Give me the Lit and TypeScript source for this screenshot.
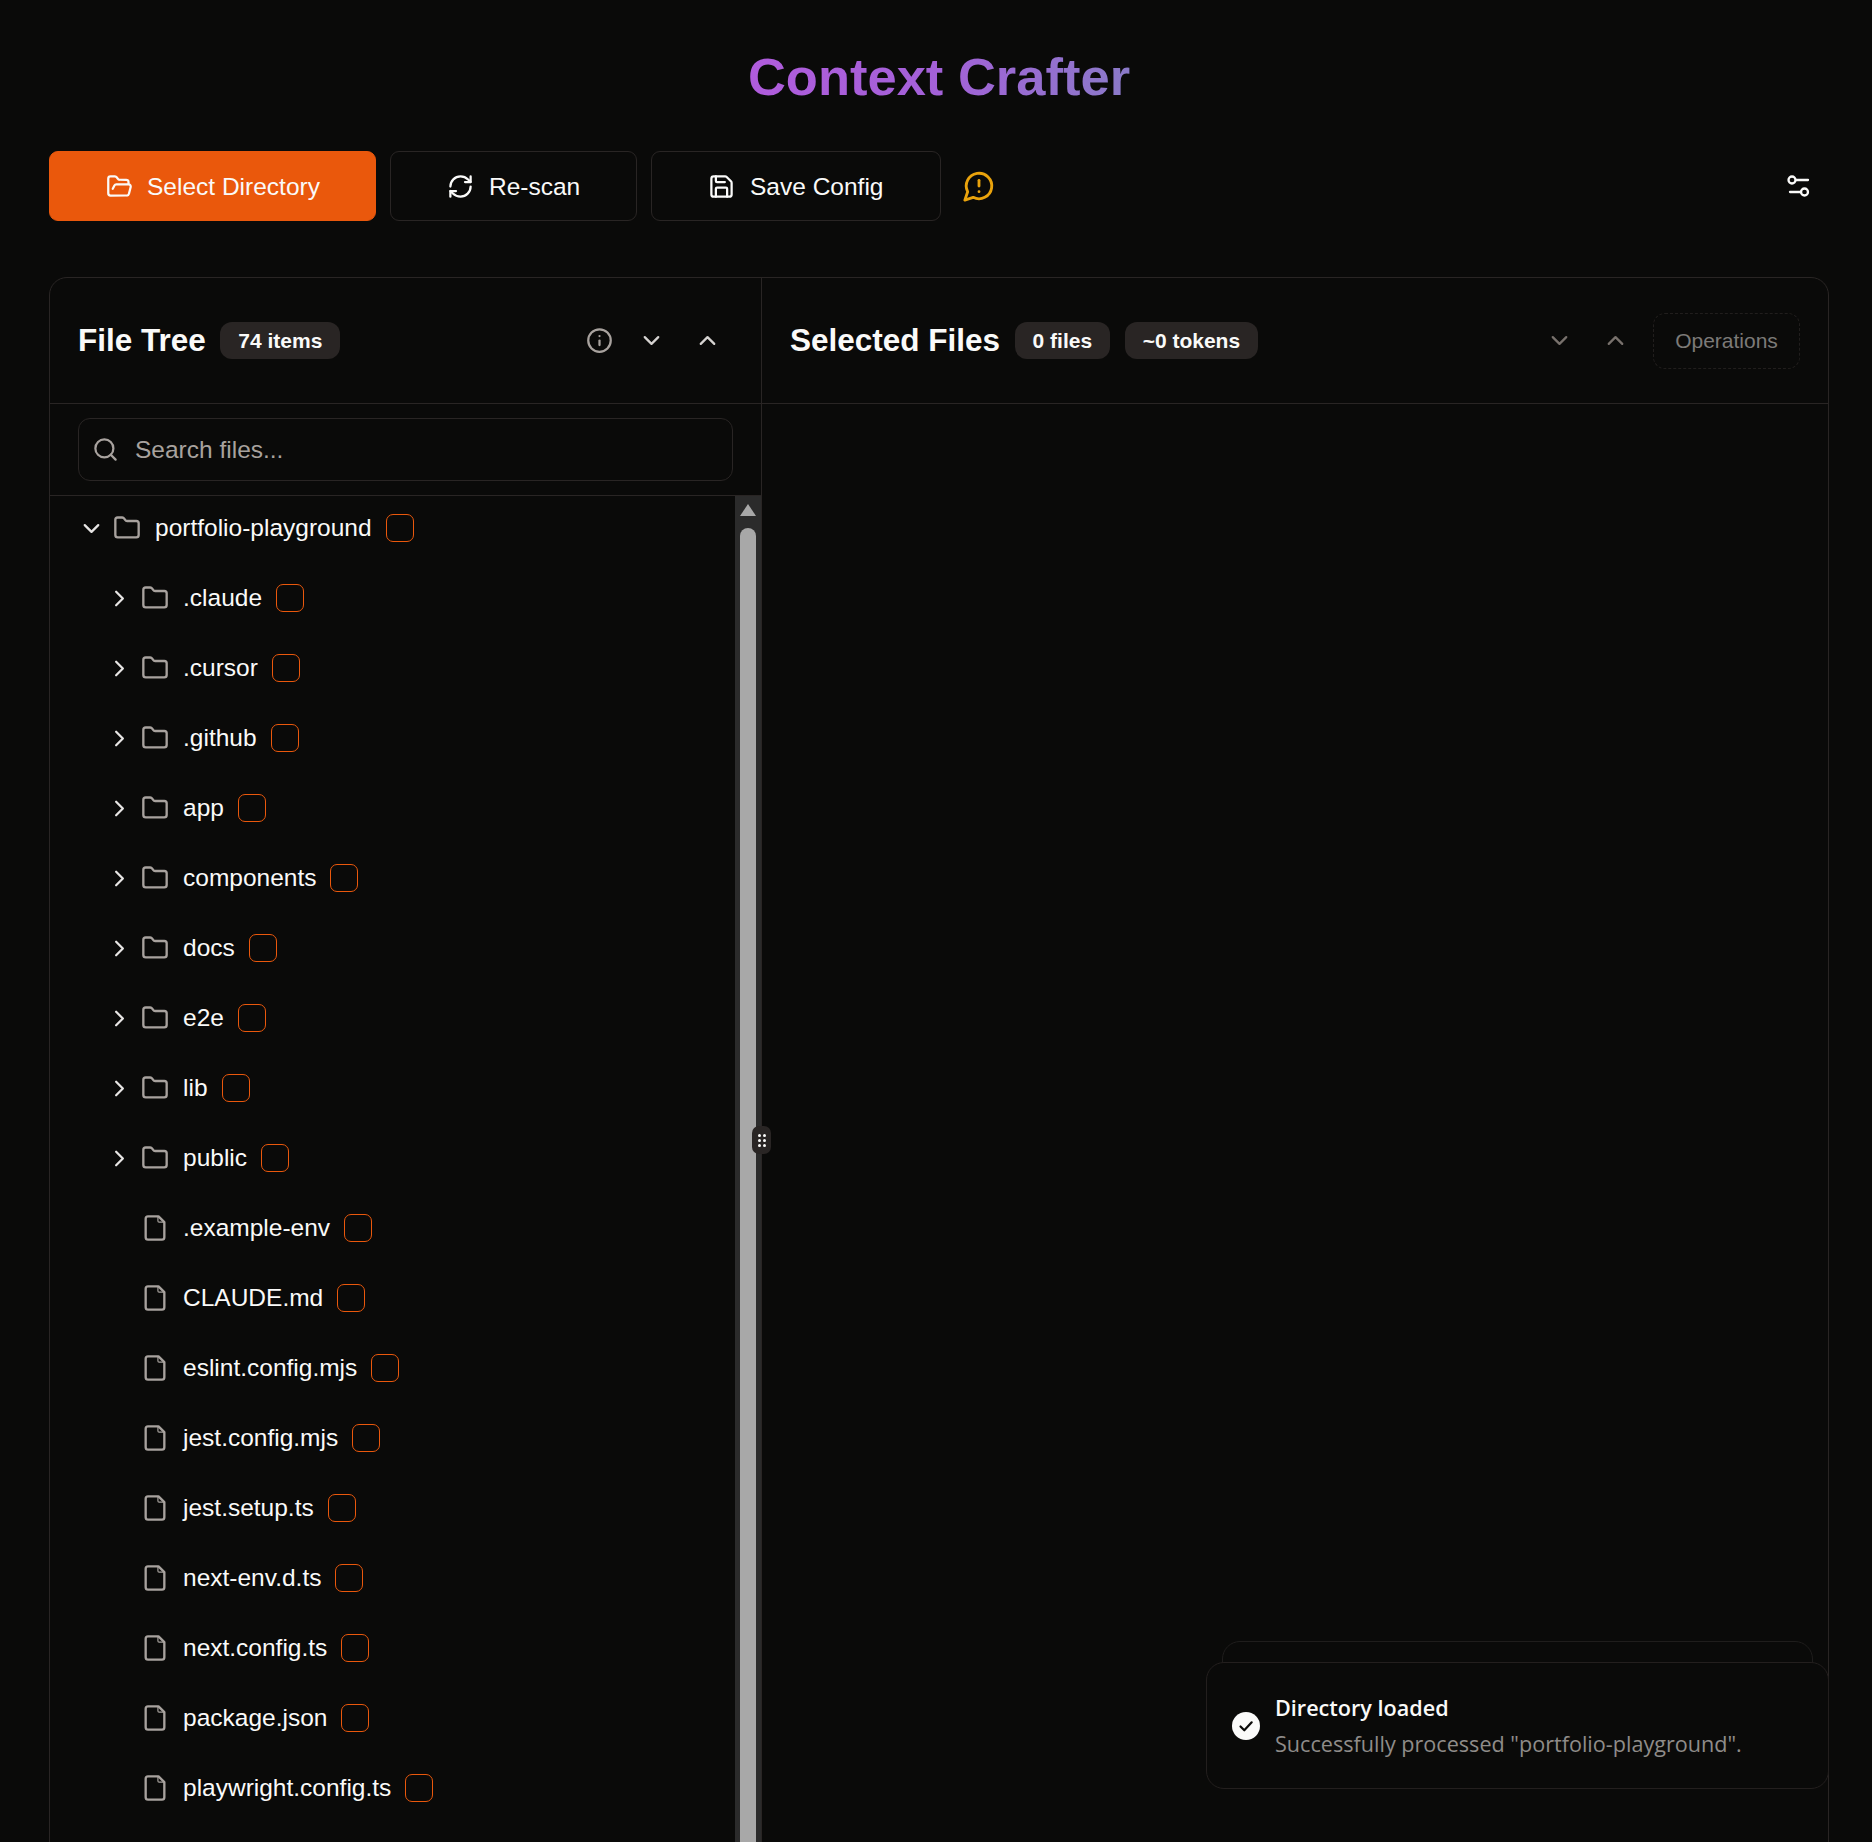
import { LitElement, html, css, svg } from "lit";
import { customElement } from "lit/decorators.js";

const ic = (size: number, body: unknown, cls = "") =>
  html`<svg class=${cls} width=${size} height=${size} viewBox="0 0 24 24" fill="none" stroke="currentColor" stroke-width="2" stroke-linecap="round" stroke-linejoin="round">${body}</svg>`;

const folderOpen = svg`<path d="m6 14 1.5-2.9A2 2 0 0 1 9.24 10H20a2 2 0 0 1 1.94 2.5l-1.54 6a2 2 0 0 1-1.95 1.5H4a2 2 0 0 1-2-2V5a2 2 0 0 1 2-2h3.9a2 2 0 0 1 1.69.9l.81 1.2a2 2 0 0 0 1.69.9H18a2 2 0 0 1 2 2v2"/>`;
const refresh = svg`<path d="M3 12a9 9 0 0 1 9-9 9.75 9.75 0 0 1 6.74 2.74L21 8"/><path d="M21 3v5h-5"/><path d="M21 12a9 9 0 0 1-9 9 9.75 9.75 0 0 1-6.74-2.74L3 16"/><path d="M8 16H3v5"/>`;
const save = svg`<path d="M15.2 3a2 2 0 0 1 1.4.6l3.8 3.8a2 2 0 0 1 .6 1.4V19a2 2 0 0 1-2 2H5a2 2 0 0 1-2-2V5a2 2 0 0 1 2-2z"/><path d="M17 21v-7a1 1 0 0 0-1-1H8a1 1 0 0 0-1 1v7"/><path d="M7 3v4a1 1 0 0 0 1 1h7"/>`;
const warn = svg`<path d="M7.9 20A9 9 0 1 0 4 16.1L2 22Z"/><path d="M12 8v4"/><path d="M12 16h.01"/>`;
const info = svg`<circle cx="12" cy="12" r="10"/><path d="M12 16v-4"/><path d="M12 8h.01"/>`;
const down = svg`<path d="m6 9 6 6 6-6"/>`;
const up = svg`<path d="m18 15-6-6-6 6"/>`;
const right = svg`<path d="m9 18 6-6-6-6"/>`;
const search = svg`<circle cx="11" cy="11" r="8"/><path d="m21 21-4.3-4.3"/>`;
const folder = svg`<path d="M20 20a2 2 0 0 0 2-2V8a2 2 0 0 0-2-2h-7.9a2 2 0 0 1-1.69-.9L9.6 3.9A2 2 0 0 0 7.93 3H4a2 2 0 0 0-2 2v13a2 2 0 0 0 2 2Z"/>`;
const file = svg`<path d="M15 2H6a2 2 0 0 0-2 2v16a2 2 0 0 0 2 2h12a2 2 0 0 0 2-2V7Z"/><path d="M14.5 2.5V6a1 1 0 0 0 1 1h4" stroke-width="1"/>`;

const folders = [".claude", ".cursor", ".github", "app", "components", "docs", "e2e", "lib", "public"];
const files = [".example-env", "CLAUDE.md", "eslint.config.mjs", "jest.config.mjs", "jest.setup.ts", "next-env.d.ts", "next.config.ts", "package.json", "playwright.config.ts"];

@customElement("app-root")
export class AppRoot extends LitElement {
  static styles = css`
    :host { display: block; height: 100vh; overflow: hidden; position: relative; background: #0a0a09; color: #fafaf9; font-family: "Liberation Sans", Arial, sans-serif; }
    svg { display: block; flex: none; }
    .page { padding: 0 43px 0 49px; display: flex; flex-direction: column; }
    .titlebar { height: 151px; box-sizing: border-box; padding-top: 46px; display: flex; justify-content: center; }
    h1 { margin: 0; font-size: 52.5px; line-height: 62px; font-weight: 700; background: linear-gradient(90deg, #b05cdc 0%, #a361d8 50%, #8a7ac8 100%); -webkit-background-clip: text; background-clip: text; color: transparent; }
    .toolbar { display: flex; align-items: center; gap: 14px; height: 70px; margin-bottom: 56px; }
    .btn { height: 70px; box-sizing: border-box; display: flex; align-items: center; gap: 15px; border-radius: 9px; border: 1.5px solid #292524; font-size: 24.5px; color: #fafaf9; }
    .btn span { position: relative; top: 0.5px; }
    .btn.primary { background: #ea580c; border-color: #ea580c; width: 327px; padding-left: 56px; gap: 14px; }
    .btn.rescan { width: 247px; padding-left: 56px; }
    .btn.save { width: 290px; padding-left: 56px; }
    .warn { color: #eaa30c; margin-left: 7px; }
    .sliders { margin-left: auto; margin-right: 18px; }
    .panel { border: 1.5px solid #292524; border-radius: 18px; display: grid; grid-template-columns: 712px 1fr; height: 1700px; overflow: hidden; }
    .col { display: flex; flex-direction: column; min-width: 0; }
    .col.left { border-right: 1.5px solid #292524; }
    .head { height: 126px; box-sizing: border-box; border-bottom: 1.5px solid #292524; display: flex; align-items: center; padding: 0 28px; gap: 14.5px; flex: none; }
    h2 { margin: -2px 0 0; font-size: 31.5px; font-weight: 700; line-height: 40px; }
    .badge { height: 37px; padding: 0 18px; display: flex; align-items: center; background: #292524; border-radius: 12px; font-size: 21px; font-weight: 700; }
    .spacer { flex: 1; }
    .hicons { display: flex; align-items: center; gap: 29px; color: #d6d3d1; margin-right: 12px; }
    .hicons .i { color: #a8a29e; margin-right: -4px; }
    .hicons.dim { color: #78716c; margin-right: 10px; }
    .ops { width: 147px; height: 56px; box-sizing: border-box; border: 1.5px dashed #211e1d; border-radius: 12px; display: flex; align-items: center; justify-content: center; font-size: 21px; color: #7c7a78; }
    .searchwrap { height: 92px; box-sizing: border-box; padding: 14px 28px 0; border-bottom: 1.5px solid #292524; flex: none; }
    .search { height: 63px; box-sizing: border-box; border: 1.5px solid #292524; border-radius: 12px; display: flex; align-items: center; gap: 16px; padding-left: 13px; color: #a8a29e; font-size: 24.5px; }
    .treewrap { display: flex; flex: 1; min-height: 0; }
    .tree { flex: 1; padding-top: 9px; display: flex; flex-direction: column; gap: 24px; min-width: 0; }
    .row { height: 46px; flex: none; display: flex; align-items: center; font-size: 24.5px; color: #fafaf9; }
    .row.root { padding-left: 28px; }
    .row.child { padding-left: 56px; }
    .chev { width: 27px; display: flex; justify-content: center; margin-right: 8px; color: #e7e5e4; }
    .ico { color: #a8a29e; margin-right: 14px; }
    .cb { width: 28px; height: 28px; box-sizing: border-box; border: 1.5px solid #ea580c; border-radius: 7px; margin-left: 14px; }
    .track { width: 26px; background: #2b2b2b; position: relative; flex: none; }
    .arrow { position: absolute; left: 5px; top: 8px; width: 0; height: 0; border-left: 8px solid transparent; border-right: 8px solid transparent; border-bottom: 12px solid #a8a8a8; }
    .thumb { position: absolute; left: 5px; width: 16px; top: 32px; bottom: 0; background: #a8a8a8; border-radius: 8px 8px 0 0; }
    .handle { position: absolute; left: 752px; top: 1126px; width: 19px; height: 28px; background: #292524; border-radius: 7px; display: grid; grid-template-columns: 3px 3px; grid-auto-rows: 3px; gap: 2px; align-content: center; justify-content: center; }
    .handle i { background: #fafaf9; border-radius: 50%; }
    .toast-back { position: absolute; left: 1222px; top: 1641px; width: 591px; height: 120px; box-sizing: border-box; border: 1.5px solid #1f1d1c; border-radius: 18px; background: #0a0a09; }
    .toast { position: absolute; left: 1206px; top: 1662px; width: 623px; height: 127px; box-sizing: border-box; border: 1.5px solid #231f1e; border-radius: 18px; background: #0a0a09; display: flex; align-items: center; gap: 15px; padding-left: 25px; }
    .msg { padding-top: 1px; }
    .tt { font-family: "Open Sans", "Noto Sans", sans-serif; font-size: 21.6px; font-weight: 600; line-height: 32px; color: #fafaf9; }
    .td { font-family: "Open Sans", "Noto Sans", sans-serif; font-size: 21.6px; line-height: 32px; margin-top: 4px; color: #8f8c89; }
  `;

  private row(name: string, icon: unknown, chevron: unknown, cls: string) {
    return html`<div class="row ${cls}">
      <span class="chev">${chevron ? ic(27, chevron) : ""}</span>
      ${ic(28, icon, "ico")}<span>${name}</span><span class="cb"></span>
    </div>`;
  }

  render() {
    return html`<div class="page">
        <div class="titlebar"><h1>Context Crafter</h1></div>
        <div class="toolbar">
          <div class="btn primary">${ic(27, folderOpen)}<span>Select Directory</span></div>
          <div class="btn rescan">${ic(27, refresh)}<span>Re-scan</span></div>
          <div class="btn save">${ic(27, save)}<span>Save Config</span></div>
          <span class="warn">${ic(34, warn)}</span>
          <svg class="sliders" width="24" height="24" viewBox="0 0 24 24" fill="none" stroke="#fafaf9" stroke-width="2.3" stroke-linecap="round">
            <circle cx="5" cy="6" r="3.5"/><path d="M9 6h12"/><path d="M3 18h11"/><circle cx="17.5" cy="18" r="3.5"/>
          </svg>
        </div>
        <div class="panel">
          <div class="col left">
            <div class="head">
              <h2>File Tree</h2><span class="badge">74 items</span><span class="spacer"></span>
              <div class="hicons"><span class="i">${ic(27, info)}</span>${ic(27, down)}${ic(27, up)}</div>
            </div>
            <div class="searchwrap"><div class="search">${ic(27, search)}<span>Search files...</span></div></div>
            <div class="treewrap">
              <div class="tree">
                ${this.row("portfolio-playground", folder, down, "root")}
                ${folders.map((f) => this.row(f, folder, right, "child"))}
                ${files.map((f) => this.row(f, file, null, "child"))}
              </div>
              <div class="track"><span class="arrow"></span><span class="thumb"></span></div>
            </div>
          </div>
          <div class="col">
            <div class="head">
              <h2>Selected Files</h2><span class="badge">0 files</span><span class="badge">~0 tokens</span><span class="spacer"></span>
              <div class="hicons dim">${ic(27, down)}${ic(27, up)}</div>
              <div class="ops">Operations</div>
            </div>
          </div>
        </div>
      </div>
      <div class="handle"><i></i><i></i><i></i><i></i><i></i><i></i></div>
      <div class="toast-back"></div>
      <div class="toast">
        <svg width="28" height="28" viewBox="0 0 28 28"><circle cx="14" cy="14" r="14" fill="#fafaf9"/><path d="M8.5 14.5l3.8 3.8 7.4-8" fill="none" stroke="#0a0a09" stroke-width="2.2" stroke-linecap="round" stroke-linejoin="round"/></svg>
        <div class="msg"><div class="tt">Directory loaded</div><div class="td">Successfully processed "portfolio-playground".</div></div>
      </div>`;
  }
}
